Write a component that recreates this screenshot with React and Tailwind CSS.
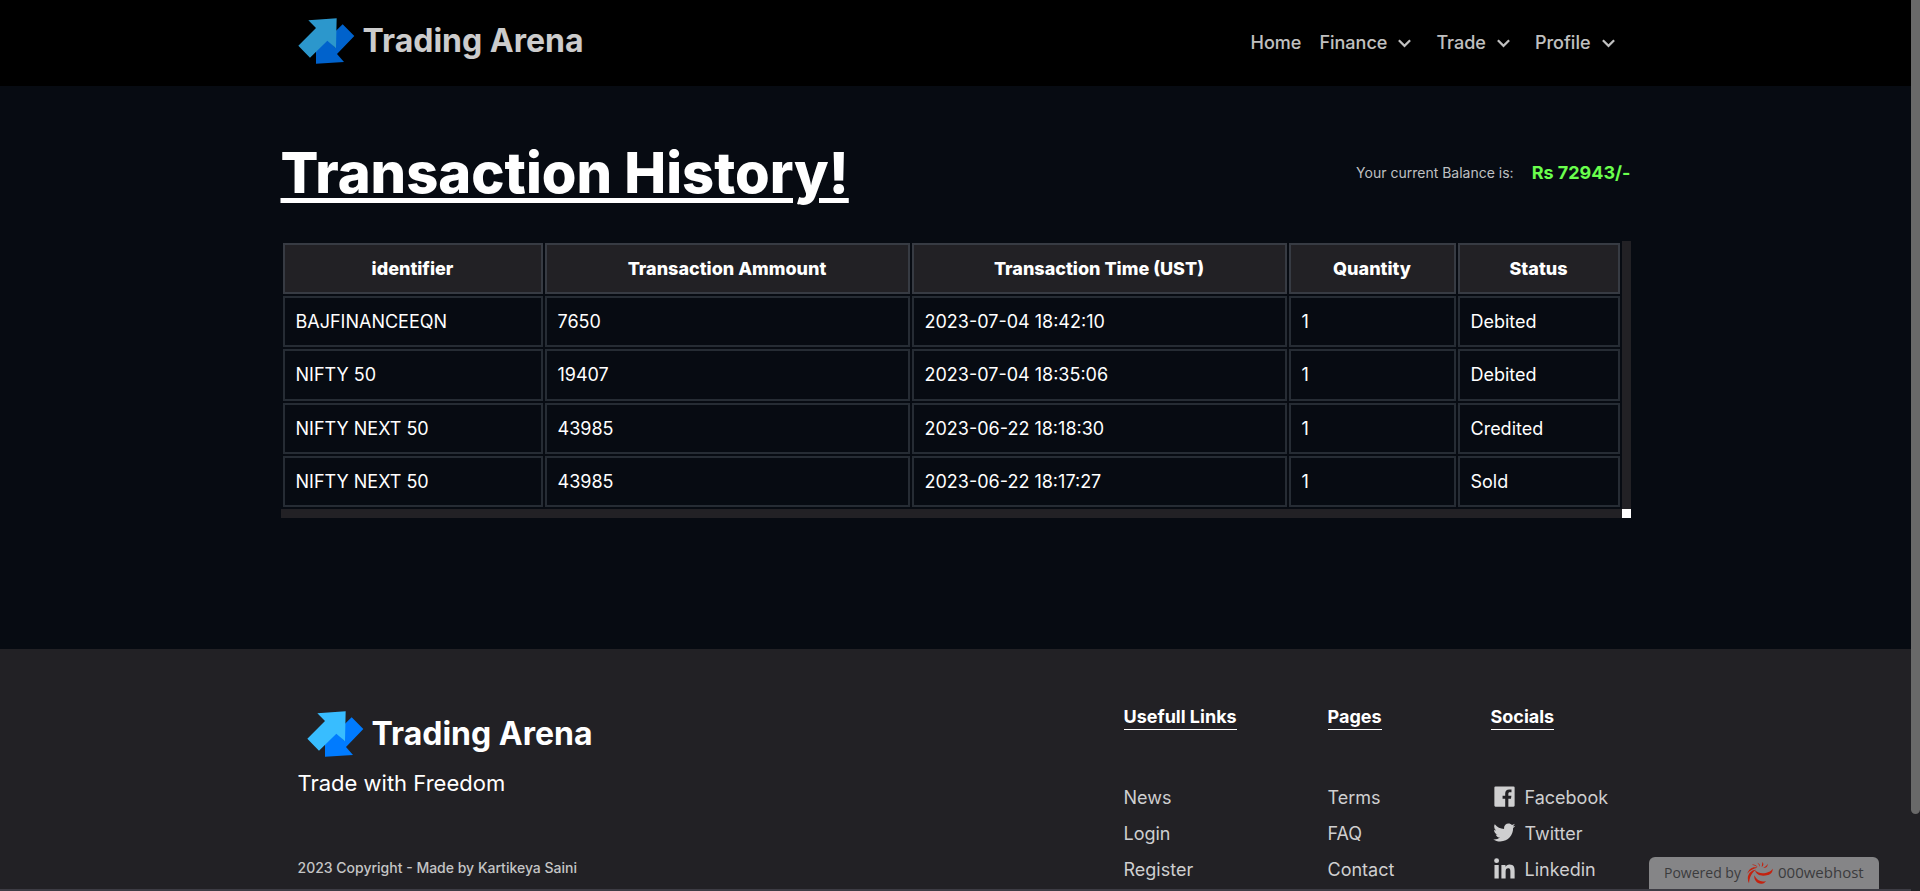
import {
  BiChevronDown,
  BiLogoFacebookSquare,
  BiLogoLinkedin,
  BiLogoTwitter,
} from "react-icons/bi";

const menus = ["Finance", "Trade", "Profile"];

const columns = [
  { label: "identifier", width: "w-[260px]" },
  { label: "Transaction Ammount", width: "w-[365px]" },
  { label: "Transaction Time (UST)", width: "w-[375px]" },
  { label: "Quantity", width: "w-[167px]" },
  { label: "Status", width: "w-[162px]" },
];

const transactions = [
  ["BAJFINANCEEQN", "7650", "2023-07-04 18:42:10", "1", "Debited"],
  ["NIFTY 50", "19407", "2023-07-04 18:35:06", "1", "Debited"],
  ["NIFTY NEXT 50", "43985", "2023-06-22 18:18:30", "1", "Credited"],
  ["NIFTY NEXT 50", "43985", "2023-06-22 18:17:27", "1", "Sold"],
];

const linkGroups = [
  {
    title: "Usefull Links",
    width: "w-[114px]",
    links: [{ name: "News" }, { name: "Login" }, { name: "Register" }],
  },
  {
    title: "Pages",
    width: "w-[73px]",
    links: [{ name: "Terms" }, { name: "FAQ" }, { name: "Contact" }],
  },
  {
    title: "Socials",
    width: "w-[123px]",
    links: [
      { name: "Facebook", Icon: BiLogoFacebookSquare },
      { name: "Twitter", Icon: BiLogoTwitter },
      { name: "Linkedin", Icon: BiLogoLinkedin },
    ],
  },
];

const Logo = () => (
  <a href="#" className="flex items-center gap-2">
    <svg viewBox="24 24 171 138" className="h-[46px] w-[57px]" aria-hidden="true">
      <path
        fill="#007bff"
        d="M158 43 193 78 141 132 162 156 78 161V120L112 88 136 113 138 62Z"
      />
      <path
        fill="#38bdff"
        d="M25 107 78 54 55 31 140 25 138 115 112 92 60 143Z"
      />
    </svg>
    <span className="text-[32px] leading-[46px] font-bold text-white">
      Trading Arena
    </span>
  </a>
);

const Header = () => (
  <header className="bg-black">
    <div className="mx-auto flex h-[86px] max-w-[1350px] items-center justify-between pr-[9px] pl-[17px] opacity-80">
      <div className="pb-1">
        <Logo />
      </div>
      <nav className="flex items-center gap-[18px] text-lg font-medium text-[#f1f1f1]">
        <a href="#">Home</a>
        {menus.map((menu) => (
          <button key={menu} type="button" className="flex items-center gap-1">
            {menu}
            <BiChevronDown className="mb-0.5 size-[27px]" />
          </button>
        ))}
      </nav>
    </div>
  </header>
);

const History = () => (
  <main className="mx-auto h-[563px] w-full max-w-[1350px] pt-[45px]">
    <div className="flex items-center justify-between">
      <h1 className="text-[56px] leading-[84px] font-extrabold text-white underline decoration-[5px] underline-offset-[5px]">
        Transaction History!
      </h1>
      <p className="flex items-center gap-[18px]">
        <span className="text-sm text-[#bfc0c2]">Your current Balance is:</span>
        <span className="text-lg font-bold text-[#6aff4d]">Rs 72943/-</span>
      </p>
    </div>

    <div className="mt-[26px] grid grid-cols-[1fr_9px] grid-rows-[auto_9px]">
      <table className="h-[268px] w-full table-fixed border-separate border-spacing-[2px] text-lg leading-[27px] text-white">
        <thead>
          <tr>
            {columns.map(({ label, width }) => (
              <th
                key={label}
                className={`${width} border-2 border-[#373b43] bg-[#222125] px-3 py-[10px] font-extrabold`}
              >
                {label}
              </th>
            ))}
          </tr>
        </thead>
        <tbody>
          {transactions.map((row, i) => (
            <tr key={i}>
              {row.map((cell, j) => (
                <td
                  key={j}
                  className="border-2 border-[#262c34] px-[11px] py-[10px]"
                >
                  {cell}
                </td>
              ))}
            </tr>
          ))}
        </tbody>
      </table>
      <div className="bg-[#222125]" />
      <div className="bg-[#222125]" />
      <div className="bg-white" />
    </div>
  </main>
);

const Footer = () => (
  <footer className="border-b-2 border-[#3d3c44] bg-[#222125]">
    <div className="mx-auto flex h-[240px] max-w-[1350px] justify-between px-[17px] pt-[55px]">
      <div>
        <div className="pt-[7px] pl-[9px]">
          <Logo />
        </div>
        <p className="mt-[10px] text-[22px] leading-[33px] text-white">
          Trade with Freedom
        </p>
        <p className="mt-[58px] text-sm font-medium text-[#c5c5c6]">
          2023 Copyright - Made by Kartikeya Saini
        </p>
      </div>
      <div className="flex gap-[90px]">
        {linkGroups.map(({ title, width, links }) => (
          <div key={title} className={width}>
            <h2 className="inline-block border-b border-white text-lg leading-[25px] font-bold whitespace-nowrap text-white">
              {title}
            </h2>
            <ul className="mt-[50px] text-lg leading-[36px] text-[#cfcfd0]">
              {links.map(({ name, Icon }) => (
                <li key={name}>
                  <a href="#" className="flex items-center gap-[7px]">
                    {Icon && <Icon className="mb-1 size-[27px]" />}
                    {name}
                  </a>
                </li>
              ))}
            </ul>
          </div>
        ))}
      </div>
    </div>
  </footer>
);

const HostBadge = () => (
  <a
    href="#"
    className="fixed right-[41px] bottom-[2px] flex h-8 w-[230px] items-center rounded-t-md bg-[#858587] pl-[15px] font-['Open_Sans',sans-serif] text-sm text-[#3b3b3d]"
  >
    <span className="w-[83px]">Powered by</span>
    <svg viewBox="0 0 78 66" className="mr-[5px] h-[22px] w-[26px]" fill="#c4220f" aria-hidden="true">
      <path d="M22 40c-2 14 8 26 22 25 6 0 10-3 13-8-14 5-27-1-35-17Z" />
      <path d="M24 25c3 14 20 20 39 14 9-3 15-10 14-19-9 14-38 20-53 5Z" />
      <path d="M6 64C-4 44 8 24 27 23 15 31 8 43 6 64Z" />
      <path d="M1 35C6 20 17 13 31 17 20 19 9 24 1 35Z" />
      <path d="M15 8c6-2 13 1 17 7-5-3-10-5-17-7Z" />
      <path d="M31 2c6 2 9 6 7 13-1-6-3-9-7-13Z" />
      <path d="M46 0c5 5 4 11-2 15 1-6 2-10 2-15Z" />
      <path d="M62 5c1 8-4 13-14 13 6-3 11-7 14-13Z" />
    </svg>
    <span className="text-[15px]">000webhost</span>
  </a>
);

const App = () => (
  <div className="min-h-screen bg-[#070b12] pr-[9px] font-['Inter',sans-serif]">
    <Header />
    <History />
    <Footer />
    <HostBadge />
    <div className="fixed inset-y-0 right-0 w-[9px] bg-[#222125]">
      <div className="h-[814px] rounded-b-full bg-[#696969]" />
    </div>
  </div>
);

export default App;
